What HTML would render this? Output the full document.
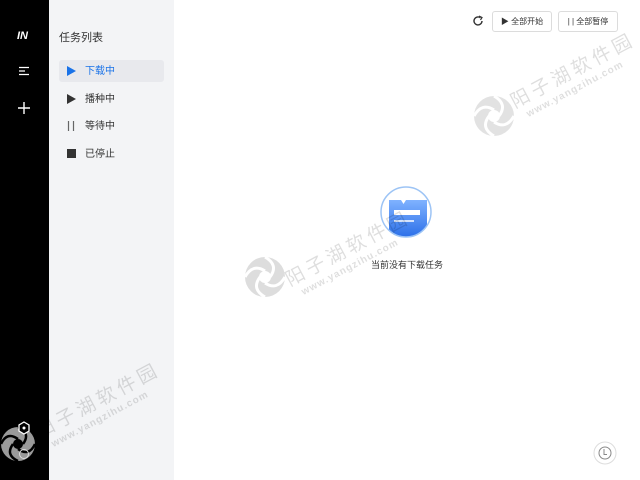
<!DOCTYPE html>
<html><head><meta charset="utf-8"><style>
*{margin:0;padding:0;box-sizing:border-box}
body{width:640px;height:480px;overflow:hidden;background:#fff;font-family:"Liberation Sans","Noto Sans CJK SC",sans-serif;position:relative}
.side{position:absolute;left:0;top:0;width:49px;height:480px;background:#000}
.list{position:absolute;left:49px;top:0;width:125px;height:480px;background:#f3f4f6}
.t{position:absolute;font-size:10px;color:#333}
.item{position:absolute;left:59px;width:105px;height:22px;border-radius:3px;font-size:10px;color:#333;line-height:22px}
.item span{position:absolute;left:26px;top:1px}
.btn{position:absolute;top:11px;height:21px;border:1px solid #dcdcdc;border-radius:3px;font-size:8px;color:#333;text-align:center;line-height:19px;background:#fff}
.wm{position:absolute;color:rgba(0,0,0,0.13);transform:rotate(-28deg);transform-origin:left top;white-space:nowrap}
.wm b{font-weight:normal;font-size:19px;letter-spacing:4px;display:block}
.wm i{font-style:normal;font-weight:bold;font-size:10px;letter-spacing:1px;display:block;margin-left:8px}
</style></head><body>
<div class="side">
<div style="position:absolute;left:17px;top:30px;color:#fff;font-weight:bold;font-style:italic;font-size:11px">IN</div>
<svg style="position:absolute;left:18px;top:66px" width="12" height="10"><path d="M1 1.5H11M1 5H7M1 8.5H11" stroke="#fff" stroke-width="1.3"/></svg>
<svg style="position:absolute;left:18px;top:102px" width="12" height="12"><path d="M6 0V12M0 6H12" stroke="#fff" stroke-width="1.4"/></svg>
<svg style="position:absolute;left:0px;top:416px" width="44" height="52"><circle cx="18" cy="28" r="17" fill="#9a9a9a"/><circle cx="18" cy="28" r="5" fill="#000"/><path d="M18 11Q31 17 23 28M35 28Q29 41 18 33M18 45Q5 39 13 28M1 28Q7 15 18 23" stroke="#000" stroke-width="2.5" fill="none"/><path d="M24 6l5 3v6l-5 3-5-3v-6z" fill="#000" stroke="#fff" stroke-width="1.3"/><circle cx="24" cy="12" r="1.5" fill="#fff"/><circle cx="24" cy="38" r="4.5" fill="none" stroke="#ddd" stroke-width="1"/></svg>
</div>
<div class="list"></div>
<div class="t" style="left:59px;top:29px;font-size:11px">任务列表</div>
<div class="item" style="top:60px;background:#e8e9ed;color:#1a73e8"><svg style="position:absolute;left:8px;top:6px" width="9" height="10"><path d="M0 0L9 5L0 10Z" fill="#1a73e8"/></svg><span>下载中</span></div>
<div class="item" style="top:88px"><svg style="position:absolute;left:8px;top:6px" width="9" height="10"><path d="M0 0L9 5L0 10Z" fill="#333"/></svg><span>播种中</span></div>
<div class="item" style="top:115px"><svg style="position:absolute;left:8px;top:6px" width="9" height="10"><path d="M1.5 0V10M6.5 0V10" stroke="#666" stroke-width="1.2"/></svg><span>等待中</span></div>
<div class="item" style="top:143px"><div style="position:absolute;left:8px;top:6px;width:9px;height:9px;background:#333"></div><span>已停止</span></div>
<svg style="position:absolute;left:472px;top:15px" width="12" height="12"><path d="M10 6A4 4 0 1 1 8.5 2.8" fill="none" stroke="#333" stroke-width="1.4"/><path d="M7 1L10 2.5L8.5 5" fill="none" stroke="#333" stroke-width="1.2"/></svg>
<div class="btn" style="left:492px;width:60px">▶ 全部开始</div>
<div class="btn" style="left:558px;width:60px">| | 全部暂停</div>
<svg style="position:absolute;left:380px;top:186px" width="54" height="54"><defs><linearGradient id="g" x1="0" y1="0" x2="0" y2="1"><stop offset="0" stop-color="#7fb2ff"/><stop offset="1" stop-color="#2a6ee8"/></linearGradient><clipPath id="c"><circle cx="26" cy="26" r="24.5"/></clipPath></defs><circle cx="26" cy="26" r="25" fill="#fff"/><g clip-path="url(#c)"><path d="M9 14H21L23.5 18L26 14H47V52H9Z" fill="url(#g)"/><rect x="14" y="24" width="26" height="5" fill="#fff"/><path d="M14 35H34" stroke="#fff" stroke-width="1.5"/></g><circle cx="26" cy="26" r="25" fill="none" stroke="#9dc4f5" stroke-width="1.5"/></svg>
<div class="t" style="left:371px;top:258px;font-size:9px">当前没有下载任务</div>
<svg style="position:absolute;left:593px;top:441px" width="24" height="24"><circle cx="12" cy="12" r="11" fill="none" stroke="#ddd"/><circle cx="12" cy="12" r="6" fill="none" stroke="#888" stroke-width="1"/><path d="M11 8V13.5H14" fill="none" stroke="#888"/></svg>
<div class="wm" style="left:280px;top:268px"><b>阳子湖软件园</b><i>www.yangzihu.com</i></div>
<div class="wm" style="left:505px;top:90px"><b>阳子湖软件园</b><i>www.yangzihu.com</i></div>
<div class="wm" style="left:30px;top:420px"><b>阳子湖软件园</b><i>www.yangzihu.com</i></div>
<svg style="position:absolute;left:243px;top:255px" width="44" height="44"><circle cx="22" cy="22" r="20" fill="#ddd"/><circle cx="22" cy="22" r="6" fill="#fff"/><path d="M22 2Q36 10 27 22M42 22Q34 36 22 28M22 42Q8 34 17 22M2 22Q10 8 22 16" stroke="#fff" stroke-width="3" fill="none"/></svg>
<svg style="position:absolute;left:472px;top:94px" width="44" height="44"><circle cx="22" cy="22" r="20" fill="#e2e2e2"/><circle cx="22" cy="22" r="6" fill="#fff"/><path d="M22 2Q36 10 27 22M42 22Q34 36 22 28M22 42Q8 34 17 22M2 22Q10 8 22 16" stroke="#fff" stroke-width="3" fill="none"/></svg>
</body></html>
